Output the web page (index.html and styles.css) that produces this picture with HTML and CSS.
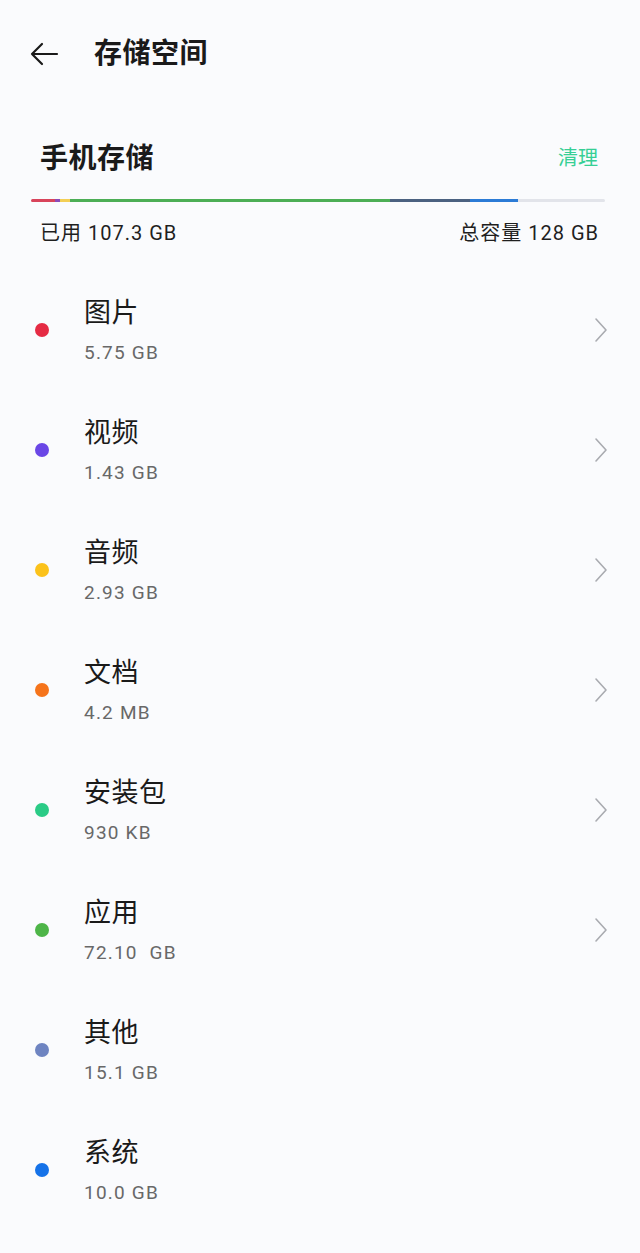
FILE: index.html
```html
<!DOCTYPE html>
<html lang="zh-CN">
<head>
<meta charset="utf-8">
<title>存储空间</title>
<link rel="stylesheet" href="styles.css">
</head>
<body>
<header class="topbar">
  <svg class="back" width="30" height="24" viewBox="0 0 30 24"><path d="M28 12H3M13 2L3 12l10 10" fill="none" stroke="#1a1a1a" stroke-width="2.2" stroke-linecap="round" stroke-linejoin="round"/></svg>
  <h1 class="title">存储空间</h1>
</header>
<section class="storage">
  <div class="storage-head">
    <h2 class="storage-title">手机存储</h2>
    <span class="clean">清理</span>
  </div>
  <div class="bar">
    <span class="seg seg-red" style="width:24px"></span>
    <span class="seg seg-purple" style="width:5px"></span>
    <span class="seg seg-yellow" style="width:10px"></span>
    <span class="seg seg-green" style="width:320px"></span>
    <span class="seg seg-slate" style="width:80px"></span>
    <span class="seg seg-blue" style="width:48px"></span>
    <span class="seg seg-free"></span>
  </div>
  <div class="stats">
    <span>已用 107.3 GB</span>
    <span>总容量 128 GB</span>
  </div>
</section>
<ul class="list">
  <li class="item"><span class="dot dot-red"></span><div class="text"><div class="name">图片</div><div class="size">5.75 GB</div></div><svg class="chev" width="14" height="26" viewBox="0 0 14 26"><path d="M2 2l10 11L2 24" fill="none" stroke="#a9abb0" stroke-width="1.6" stroke-linecap="round" stroke-linejoin="round"/></svg></li>
  <li class="item"><span class="dot dot-purple"></span><div class="text"><div class="name">视频</div><div class="size">1.43 GB</div></div><svg class="chev" width="14" height="26" viewBox="0 0 14 26"><path d="M2 2l10 11L2 24" fill="none" stroke="#a9abb0" stroke-width="1.6" stroke-linecap="round" stroke-linejoin="round"/></svg></li>
  <li class="item"><span class="dot dot-yellow"></span><div class="text"><div class="name">音频</div><div class="size">2.93 GB</div></div><svg class="chev" width="14" height="26" viewBox="0 0 14 26"><path d="M2 2l10 11L2 24" fill="none" stroke="#a9abb0" stroke-width="1.6" stroke-linecap="round" stroke-linejoin="round"/></svg></li>
  <li class="item"><span class="dot dot-orange"></span><div class="text"><div class="name">文档</div><div class="size">4.2 MB</div></div><svg class="chev" width="14" height="26" viewBox="0 0 14 26"><path d="M2 2l10 11L2 24" fill="none" stroke="#a9abb0" stroke-width="1.6" stroke-linecap="round" stroke-linejoin="round"/></svg></li>
  <li class="item"><span class="dot dot-teal"></span><div class="text"><div class="name">安装包</div><div class="size">930 KB</div></div><svg class="chev" width="14" height="26" viewBox="0 0 14 26"><path d="M2 2l10 11L2 24" fill="none" stroke="#a9abb0" stroke-width="1.6" stroke-linecap="round" stroke-linejoin="round"/></svg></li>
  <li class="item"><span class="dot dot-green"></span><div class="text"><div class="name">应用</div><div class="size">72.10&nbsp; GB</div></div><svg class="chev" width="14" height="26" viewBox="0 0 14 26"><path d="M2 2l10 11L2 24" fill="none" stroke="#a9abb0" stroke-width="1.6" stroke-linecap="round" stroke-linejoin="round"/></svg></li>
  <li class="item"><span class="dot dot-slate"></span><div class="text"><div class="name">其他</div><div class="size">15.1 GB</div></div></li>
  <li class="item"><span class="dot dot-blue"></span><div class="text"><div class="name">系统</div><div class="size">10.0 GB</div></div></li>
</ul>
</body>
</html>
```

FILE: styles.css
```css
html {
  overflow: hidden;
}
body {
  margin: 0;
  background: #fafbfd;
  color: #1a1a1a;
  font-family: Roboto, "Noto Sans CJK SC", sans-serif;
}
.topbar {
  height: 108px;
  display: flex;
  align-items: center;
  padding-left: 29px;
  gap: 35px;
}
.back {
  display: block;
}
.title {
  margin: 0;
  font-size: 28px;
  font-weight: 600;
  line-height: 40px;
  letter-spacing: 0.5px;
}
.storage {
  padding: 0 35px 0 31px;
}
.storage-head {
  margin-top: 28px;
  height: 40px;
  display: flex;
  align-items: center;
  justify-content: space-between;
  padding-left: 9px;
}
.storage-title {
  margin: 0;
  font-size: 28px;
  font-weight: 600;
  letter-spacing: 0.5px;
}
.clean {
  color: #36cf95;
  font-size: 20px;
  margin-right: 7px;
}
.bar {
  margin-top: 23px;
  height: 3px;
  display: flex;
  border-radius: 2px;
  overflow: hidden;
}
.seg {
  display: block;
  height: 100%;
}
.seg-red { background: #d8445b; }
.seg-purple { background: #8b4bb8; }
.seg-yellow { background: #f3cf55; }
.seg-green { background: #4cae55; }
.seg-slate { background: #4b6180; }
.seg-blue { background: #2b7bd6; }
.seg-free { flex: 1; background: #e2e4ea; }
.stats {
  margin-top: 19px;
  display: flex;
  justify-content: space-between;
  padding: 0 6px 0 9px;
  font-size: 20px;
  line-height: 24px;
  letter-spacing: 1px;
  color: #1f1f1f;
}
.list {
  list-style: none;
  margin: 25px 0 0;
  padding: 0;
}
.item {
  height: 120px;
  display: flex;
  align-items: center;
  padding: 0 32px 0 35px;
}
.dot {
  width: 14px;
  height: 14px;
  border-radius: 50%;
  flex: none;
}
.dot-red { background: #e52b44; }
.dot-purple { background: #6a47e6; }
.dot-yellow { background: #fbc21b; }
.dot-orange { background: #f5741b; }
.dot-teal { background: #2acb86; }
.dot-green { background: #4db548; }
.dot-slate { background: #6e84c1; }
.dot-blue { background: #1572e8; }
.text {
  flex: 1;
  margin-left: 35px;
}
.name {
  font-size: 27px;
  line-height: 34px;
  letter-spacing: 0.5px;
}
.size {
  margin-top: 11px;
  font-size: 19px;
  line-height: 24px;
  color: #686868;
  letter-spacing: 1.2px;
}
.chev {
  display: block;
  flex: none;
}
```
